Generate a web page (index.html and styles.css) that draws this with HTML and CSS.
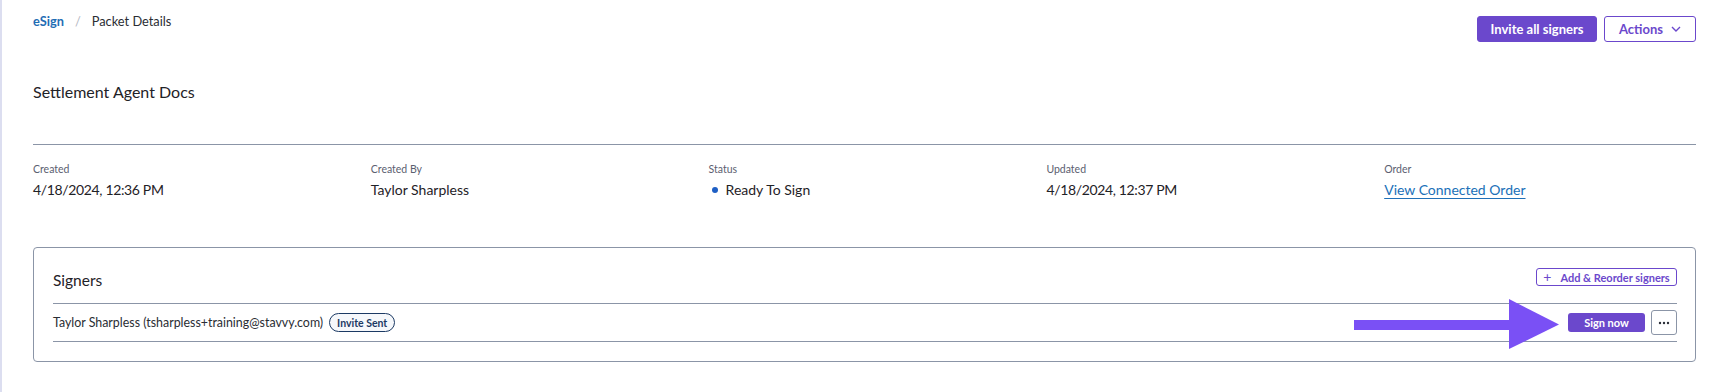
FILE: index.html
```html
<!DOCTYPE html>
<html>
<head>
<meta charset="utf-8">
<link rel="stylesheet" href="styles.css">
</head>
<body>
<div class="page">
  <header class="topbar">
    <nav class="crumbs">
      <a class="crumb-link">eSign</a>
      <span class="crumb-sep">/</span>
      <span class="crumb-current">Packet Details</span>
    </nav>
    <div class="top-actions">
      <button class="btn btn-primary">Invite all signers</button>
      <button class="btn btn-outline">Actions
        <svg class="chev" width="10" height="6" viewBox="0 0 10 6"><path d="M1 1l4 4 4-4" fill="none" stroke="currentColor" stroke-width="1.4"/></svg>
      </button>
    </div>
  </header>

  <h1 class="title">Settlement Agent Docs</h1>

  <section class="meta">
    <div class="meta-item">
      <div class="meta-label">Created</div>
      <div class="meta-value date">4/18/2024, 12:36 PM</div>
    </div>
    <div class="meta-item">
      <div class="meta-label">Created By</div>
      <div class="meta-value">Taylor Sharpless</div>
    </div>
    <div class="meta-item">
      <div class="meta-label">Status</div>
      <div class="meta-value status"><span class="dot"></span>Ready To Sign</div>
    </div>
    <div class="meta-item">
      <div class="meta-label">Updated</div>
      <div class="meta-value date">4/18/2024, 12:37 PM</div>
    </div>
    <div class="meta-item">
      <div class="meta-label">Order</div>
      <div class="meta-value"><a class="order-link">View Connected Order</a></div>
    </div>
  </section>

  <section class="card">
    <div class="card-head">
      <h2 class="card-title">Signers</h2>
      <button class="btn-small-outline"><span class="plus">+</span>Add &amp; Reorder signers</button>
    </div>
    <div class="signer-row">
      <div class="signer-info">
        <span class="signer-name">Taylor Sharpless (tsharpless+training@stavvy.com)</span>
        <span class="badge">Invite Sent</span>
      </div>
      <div class="signer-actions">
        <button class="btn-sign">Sign now</button>
        <button class="btn-more">
          <svg width="12" height="4" viewBox="0 0 12 4"><circle cx="2" cy="2" r="1.2" fill="#2b2f38"/><circle cx="6" cy="2" r="1.2" fill="#2b2f38"/><circle cx="10" cy="2" r="1.2" fill="#2b2f38"/></svg>
        </button>
      </div>
      <svg class="arrow" width="205" height="50" viewBox="0 0 205 50">
        <rect x="0" y="21" width="156" height="10" fill="#7a50f5"/>
        <polygon points="155,0 155,50 205,25.5" fill="#7a50f5"/>
      </svg>
    </div>
  </section>
</div>
</body>
</html>
```

FILE: styles.css
```css
* { box-sizing: border-box; }
html, body { margin: 0; padding: 0; background: #fff; }
body { font-family: "Lato", "Liberation Sans", sans-serif; color: #23262d; }

.page {
  border-left: 2px solid #dcdef0;
  min-height: 392px;
  padding: 8px 28px 0 31px;
}

.topbar {
  display: flex;
  justify-content: space-between;
  align-items: flex-start;
}
.crumbs {
  display: flex;
  align-items: center;
  height: 26px;
  font-size: 12.8px;
}
.crumb-link { color: #1f6db4; font-weight: 700; }
.crumb-sep { color: #b4b8c2; margin: 0 11px 0 11px; }
.crumb-current { color: #2a2d33; }

.top-actions { display: flex; gap: 7px; margin-top: 8px; }
.btn {
  height: 26px;
  border-radius: 3px;
  font-family: inherit;
  font-size: 13px;
  font-weight: 700;
  padding: 0;
  display: inline-flex;
  align-items: center;
  justify-content: center;
}
.btn-primary { width: 120px; background: #6b48cc; color: #fff; border: 1px solid #6b48cc; }
.btn-outline { width: 92px; background: #fff; color: #6b48cc; border: 1px solid #6b48cc; gap: 8px; }
.chev { display: block; }

.title {
  margin: 40px 0 0 0;
  font-size: 16px;
  line-height: 20px;
  font-weight: 400;
  color: #1f2227;
  padding-bottom: 42px;
  border-bottom: 1px solid #8b95a7;
}

.meta {
  display: grid;
  grid-template-columns: repeat(5, 1fr);
  column-gap: 26px;
  margin-top: 17px;
}
.meta-label { font-size: 10.5px; line-height: 14px; color: #5b6070; }
.meta-value { margin-top: 5px; font-size: 14px; line-height: 18px; color: #1f2227; }
.date { letter-spacing: -0.35px; }
.status { display: flex; align-items: center; }
.dot { width: 6px; height: 6px; border-radius: 50%; background: #1e5fc4; margin: 0 8px 0 3px; }
.order-link { color: #2070b8; text-decoration: underline; text-underline-offset: 3px; }

.card {
  margin-top: 48px;
  border: 1px solid #8b95a7;
  border-radius: 4px;
  padding: 0 18px 19px 19px;
}
.card-head {
  display: flex;
  justify-content: space-between;
  align-items: flex-start;
  padding-top: 22px;
  padding-bottom: 13px;
  border-bottom: 1px solid #8b95a7;
}
.card-title { margin: 0; font-size: 15.5px; line-height: 20px; font-weight: 400; color: #1f2227; }
.btn-small-outline {
  margin-top: -2px;
  width: 141px;
  height: 18px;
  border: 1px solid #6b48cc;
  border-radius: 3px;
  background: #fff;
  color: #6b48cc;
  font-family: inherit;
  font-size: 11px;
  font-weight: 700;
  display: inline-flex;
  align-items: center;
  justify-content: center;
  padding: 0;
}
.plus { font-weight: 400; font-size: 14px; margin-right: 9px; line-height: 1; }

.signer-row {
  position: relative;
  height: 38px;
  display: flex;
  justify-content: space-between;
  align-items: center;
  border-bottom: 1px solid #8b95a7;
}
.signer-info { display: flex; align-items: center; gap: 6px; }
.signer-name { font-size: 12.4px; color: #2a2d33; }
.badge {
  display: inline-flex;
  align-items: center;
  justify-content: center;
  width: 66px;
  height: 19px;
  border: 1px solid #1c3a64;
  border-radius: 10px;
  font-size: 10.5px;
  font-weight: 700;
  color: #1c3a64;
  background: #f6f8fb;
}
.signer-actions { display: flex; align-items: center; gap: 6px; }
.btn-sign {
  width: 77px;
  height: 19px;
  border: none;
  border-radius: 3px;
  background: #6b48cc;
  color: #fff;
  font-family: inherit;
  font-size: 11px;
  font-weight: 700;
  padding: 0;
}
.btn-more {
  width: 26px;
  height: 25px;
  border: 1px solid #8b95a7;
  border-radius: 3px;
  background: #fff;
  padding: 0;
  display: inline-flex;
  align-items: center;
  justify-content: center;
}
.arrow { position: absolute; left: 1301px; top: -5px; }
```
